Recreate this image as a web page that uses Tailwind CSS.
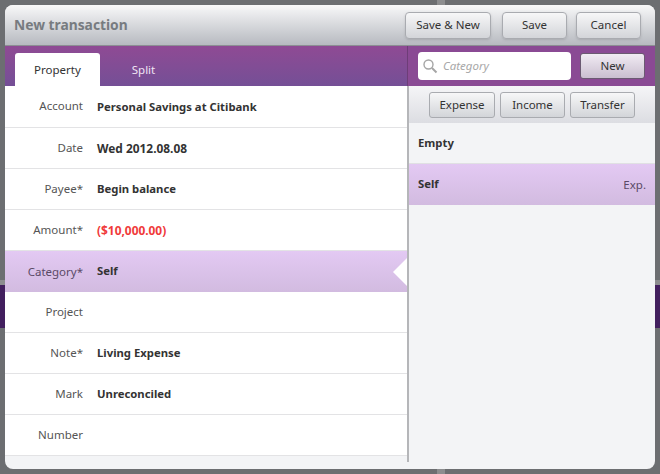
<!DOCTYPE html>
<html lang="en">
<head>
    <meta charset="UTF-8">
    <title>New transaction</title>
    <script src="https://cdn.jsdelivr.net/npm/@tailwindcss/browser@4"></script>
</head>
<body class="w-[660px] h-[474px] overflow-hidden relative bg-[#6c6e71] font-['Noto_Sans','Open_Sans',sans-serif] text-[11.5px] text-[#333]">
    <!-- Backdrop -->
    <div class="absolute left-0 right-0 top-[280px] h-[48px] bg-[#421f5e] border-t-[5px] border-[#8c8d8f]"></div>
    <div class="absolute left-[437px] top-0 bottom-0 w-[8px] bg-[#8c8d8f]"></div>

    <!-- Dialog -->
    <div class="absolute left-[5px] top-[5px] w-[650px] h-[464px] rounded-[8px] overflow-hidden bg-[#f3f4f6] flex flex-col">
        <!-- Title bar -->
        <div class="h-[41px] shrink-0 flex items-center justify-between pl-[9px] pr-[14px] bg-gradient-to-b from-[#f8f8f9] to-[#b7bac0] border-b border-[#8c8e93]">
            <h1 class="text-[13.8px] font-bold text-[#777b80]">New transaction</h1>
            <div class="flex gap-[9px]">
                <button class="w-[86px] h-[27px] mr-[2px] rounded-[4px] border border-[#a9abb0] bg-gradient-to-b from-[#f7f7f8] to-[#d3d5d9] shadow-sm">Save &amp; New</button>
                <button class="w-[65px] h-[27px] rounded-[4px] border border-[#a9abb0] bg-gradient-to-b from-[#f7f7f8] to-[#d3d5d9] shadow-sm">Save</button>
                <button class="w-[65px] h-[27px] rounded-[4px] border border-[#a9abb0] bg-gradient-to-b from-[#f7f7f8] to-[#d3d5d9] shadow-sm">Cancel</button>
            </div>
        </div>

        <div class="flex flex-1 min-h-0">
            <!-- Left column -->
            <div class="w-[402px] shrink-0 flex flex-col">
                <div class="h-[40px] shrink-0 flex items-end pl-[10px] bg-gradient-to-b from-[#8f4a94] to-[#744f96]">
                    <div class="w-[85px] h-[33px] rounded-t-[3px] bg-white flex items-center justify-center text-[#333]">Property</div>
                    <div class="w-[87px] h-[33px] flex items-center justify-center text-[#f0e4f4]">Split</div>
                </div>
                <div class="h-[42px] shrink-0 flex items-center pt-px bg-white border-b border-[#e3e3e5]">
                    <span class="w-[78px] mb-[2px] text-right text-[#555]">Account</span>
                    <span class="ml-[14px] font-bold text-[11.3px]">Personal Savings at Citibank</span>
                </div>
                <div class="h-[41px] shrink-0 flex items-center pt-px bg-white border-b border-[#e3e3e5]">
                    <span class="w-[78px] mb-[2px] text-right text-[#555]">Date</span>
                    <span class="ml-[14px] font-bold text-[11.9px]">Wed 2012.08.08</span>
                </div>
                <div class="h-[41px] shrink-0 flex items-center pt-px bg-white border-b border-[#e3e3e5]">
                    <span class="w-[78px] mb-[2px] text-right text-[#555]">Payee*</span>
                    <span class="ml-[14px] font-bold text-[11.3px]">Begin balance</span>
                </div>
                <div class="h-[41px] shrink-0 flex items-center pt-px bg-white border-b border-[#e3e3e5]">
                    <span class="w-[78px] mb-[2px] text-right text-[#555]">Amount*</span>
                    <span class="ml-[14px] font-bold text-[11.9px] text-[#f03a3a]">($10,000.00)</span>
                </div>
                <div class="h-[41px] shrink-0 relative flex items-center bg-gradient-to-b from-[#e3c9f3] to-[#d2bbe0]">
                    <span class="w-[78px] text-right text-[#5a4a66]">Category*</span>
                    <span class="ml-[14px] font-bold text-[11.3px]">Self</span>
                    <svg class="absolute right-0 top-[7px]" width="14" height="28" viewBox="0 0 14 28"><path d="M14 0 L0 14 L14 28 Z" fill="#fff"/></svg>
                </div>
                <div class="h-[41px] shrink-0 flex items-center pt-px bg-white border-b border-[#e3e3e5]">
                    <span class="w-[78px] mb-[2px] text-right text-[#555]">Project</span>
                </div>
                <div class="h-[41px] shrink-0 flex items-center pt-px bg-white border-b border-[#e3e3e5]">
                    <span class="w-[78px] mb-[2px] text-right text-[#555]">Note*</span>
                    <span class="ml-[14px] font-bold text-[11.3px]">Living Expense</span>
                </div>
                <div class="h-[41px] shrink-0 flex items-center pt-px bg-white border-b border-[#e3e3e5]">
                    <span class="w-[78px] mb-[2px] text-right text-[#555]">Mark</span>
                    <span class="ml-[14px] font-bold text-[11.3px]">Unreconciled</span>
                </div>
                <div class="h-[41px] shrink-0 flex items-center pt-px bg-white border-b border-[#e3e3e5]">
                    <span class="w-[78px] mb-[2px] text-right text-[#555]">Number</span>
                </div>
            </div>

            <!-- Right column -->
            <div class="flex-1 flex flex-col">
                <div class="h-[40px] shrink-0 flex items-center pl-[10px] pr-[10px] gap-[9px] bg-[#8a4a94] border-l border-[#6e3d78]">
                    <div class="w-[153px] h-[28px] rounded-[4px] bg-white flex items-center pl-[4px] gap-[5px]">
                        <svg width="16" height="16" viewBox="0 0 16 16" fill="none" stroke="#a5a5a5" stroke-width="1.4"><circle cx="6.5" cy="6.5" r="4.5"/><path d="M10 10 L14.5 14.5" stroke-width="2"/></svg>
                        <span class="italic text-[11.5px] text-[#a8a8a8]">Category</span>
                    </div>
                    <button class="w-[65px] h-[26px] rounded-[3px] border border-[#6b5a72] bg-gradient-to-b from-[#f1ebf3] to-[#cabfd0]">New</button>
                </div>
                <div class="flex-1 flex flex-col border-l-2 border-[#b5b6b9] mb-[7px]">
                    <div class="h-[37px] shrink-0 flex items-center pl-[20px] gap-[5px] bg-gradient-to-b from-[#f5f5f7] to-[#dcdde2]">
                        <button class="w-[66px] h-[26px] rounded-[3px] border border-[#a9abb0] bg-gradient-to-b from-[#f7f7f8] to-[#d3d5d9]">Expense</button>
                        <button class="w-[65px] h-[26px] rounded-[3px] border border-[#a9abb0] bg-gradient-to-b from-[#f7f7f8] to-[#d3d5d9]">Income</button>
                        <button class="w-[65px] h-[26px] rounded-[3px] border border-[#a9abb0] bg-gradient-to-b from-[#f7f7f8] to-[#d3d5d9]">Transfer</button>
                    </div>
                    <div class="h-[41px] shrink-0 flex items-center pl-[9px] font-bold text-[11.3px] border-b border-[#e0e0e3]">Empty</div>
                    <div class="h-[41px] shrink-0 flex items-center justify-between pl-[9px] pr-[9px] bg-gradient-to-b from-[#e3c9f3] to-[#d2bbe0]">
                        <span class="font-bold text-[11.3px]">Self</span>
                        <span class="text-[#5a4a66]">Exp.</span>
                    </div>
                </div>
            </div>
        </div>
    </div>
</body>
</html>
